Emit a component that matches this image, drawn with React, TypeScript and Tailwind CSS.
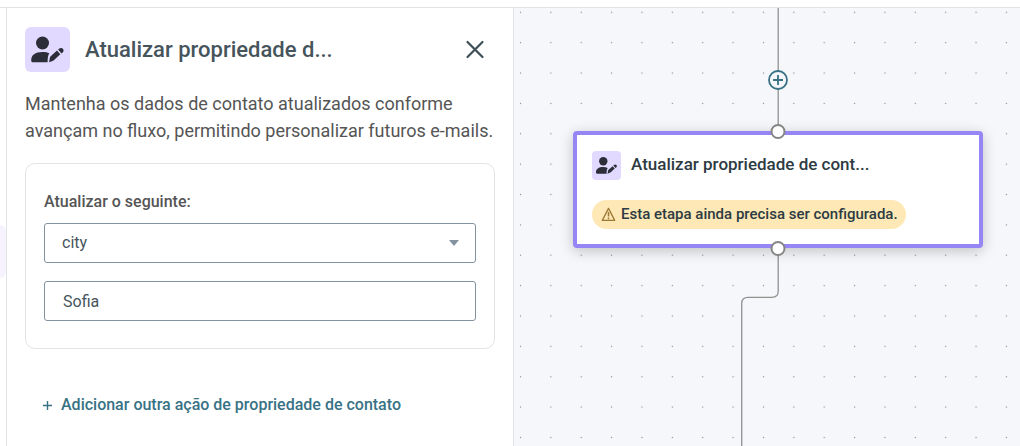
interface IconProps {
    className?: string;
}

function UserEditIcon({ className }: IconProps) {
    return (
        <svg className={className} viewBox="0 0 45 45" fill="#2b2e38" aria-hidden="true">
            <circle cx="17.5" cy="16" r="6.5" />
            <path d="M6.2 33.4C6.2 28 10.200 25 17.300 25c2.900 0 5.200.4 7 1.300-1.300 2.200-1.700 5-1.700 8.900H8C6.700 35.200 6.200 34.500 6.200 33.400z" />
            <path d="M24.100 35.300l.7-4.400c.1-.7.4-1.200.9-1.700l6.300-5.600 3.300 3.700-6.200 5.700c-.4.4-1 .7-1.600.9z" />
            <path d="M33.100 22.600l.9-.8c1.200-1.200 2.900-1.200 3.900-.1s.9 2.700-.3 3.800l-1.100.9z" />
        </svg>
    );
}

function WarningIcon({ className }: IconProps) {
    return (
        <svg className={className} viewBox="0 0 15 15" fill="none" stroke="#9c7a36" aria-hidden="true">
            <path d="M7.5 1.4L13.7 13.4H1.3z" strokeWidth="1.3" strokeLinejoin="round" />
            <path d="M7.5 5v4.6M7.5 10.6v1.6" strokeWidth="1.5" />
        </svg>
    );
}

function PropertyPanel() {
    return (
        <section className="w-[508px] shrink-0 border-x border-[#e1e4e6] bg-white px-[18px] pt-[19px] text-[#555]">
            <header className="flex items-center">
                <div className="size-[45px] shrink-0 rounded-md bg-[#e1d9ff]">
                    <UserEditIcon className="size-full" />
                </div>
                <h2 className="ml-[15px] flex-1 text-[22px] leading-8 font-medium text-[#46545c]">
                    Atualizar propriedade d...
                </h2>
                <button type="button" aria-label="Fechar" className="mr-2 flex size-6 items-center justify-center">
                    <svg className="size-5" viewBox="0 0 20 20" fill="none" stroke="#3f4f58" strokeWidth="2.2" strokeLinecap="round">
                        <path d="M2.500 2l15 15M17.500 2l-15 15" />
                    </svg>
                </button>
            </header>

            <p className="mt-[18px] text-[18px] leading-[27px]">
                Mantenha os dados de contato atualizados conforme avançam no fluxo, permitindo personalizar futuros e-mails.
            </p>

            <div className="mt-[19px] rounded-[10px] border border-[#e1e4e6] px-[18px] pt-[26px] pb-[27px]">
                <label htmlFor="property" className="block text-[16px] leading-6 font-medium">
                    Atualizar o seguinte:
                </label>
                <div className="relative mt-[9px]">
                    <select
                        id="property"
                        defaultValue="city"
                        className="block h-10 w-full appearance-none rounded-[3px] border border-[#8493a0] bg-white px-[17px] text-[16px] text-[#46545c]"
                    >
                        <option value="city">city</option>
                    </select>
                    <svg className="pointer-events-none absolute top-[17px] right-[17px] h-[6px] w-[10px]" viewBox="0 0 10 6" fill="#8493a0">
                        <path d="M0 0h10L5 6z" />
                    </svg>
                </div>
                <input
                    type="text"
                    aria-label="Valor"
                    defaultValue="Sofia"
                    className="mt-[18px] block h-10 w-full rounded-[3px] border border-[#8493a0] bg-white px-[18px] text-[16px] text-[#46545c]"
                />
            </div>

            <button type="button" className="mt-11 ml-[17px] flex items-center gap-2 text-[16px] leading-6 font-medium text-[#387285]">
                <svg className="size-[11px]" viewBox="0 0 11 11" stroke="currentColor" strokeWidth="1.4">
                    <path d="M1 5.5h9M5.5 1v9" />
                </svg>
                Adicionar outra ação de propriedade de contato
            </button>
        </section>
    );
}

function Handle({ className }: IconProps) {
    return <span className={`absolute left-1/2 size-[15px] -translate-x-1/2 rounded-full border-2 border-[#858585] bg-white ${className}`} />;
}

function FlowNode() {
    return (
        <article className="absolute top-[123px] left-[59px] w-[410px] rounded-[4px] border-4 border-[#9685f5] bg-white px-[15px] pt-4 pb-[15px] text-[#2d3b42] shadow-[0_3px_14px_rgba(0,0,0,0.22)]">
            <Handle className="-top-[11px]" />
            <div className="flex items-start gap-[10px]">
                <div className="size-[29px] shrink-0 rounded-[4px] bg-[#e1d9ff]">
                    <UserEditIcon className="size-full" />
                </div>
                <h3 className="text-[17px] leading-[27px] font-medium">Atualizar propriedade de cont...</h3>
            </div>
            <p className="mt-5 flex h-[29px] w-fit items-center gap-[5px] rounded-full bg-[#fee9b6] pr-2 pl-[9px] text-[15px] font-medium">
                <WarningIcon className="size-[15px]" />
                Esta etapa ainda precisa ser configurada.
            </p>
            <Handle className="-bottom-3" />
        </article>
    );
}

function FlowCanvas() {
    return (
        <main className="relative flex-1 overflow-hidden bg-[#f6f7fa]">
            <svg className="absolute inset-0 size-full" fill="none" aria-hidden="true">
                <pattern id="dots" x="-8.7" y="-10.9" width="30.37" height="30.37" patternUnits="userSpaceOnUse">
                    <circle cx="15.2" cy="15.2" r="0.7" fill="#8c8f94" />
                </pattern>
                <rect width="100%" height="100%" fill="url(#dots)" />
                <g stroke="#919191" strokeWidth="1.3">
                    <path d="M264.200 0V123" />
                    <path d="M264.200 240V283.500Q264.200 289.300 258 289.300H234Q227.700 289.300 227.700 295.500V2000" />
                </g>
            </svg>
            <button type="button" aria-label="Adicionar etapa" className="absolute top-[62px] left-[254px] size-5">
                <svg className="size-full" viewBox="0 0 20 20" fill="#f6f7fa" stroke="#387285" strokeWidth="1.8">
                    <circle cx="10" cy="10" r="9" />
                    <path d="M5 10h10M10 5v10" />
                </svg>
            </button>
            <FlowNode />
        </main>
    );
}

export default function App() {
    return (
        <div className="flex min-h-screen flex-col bg-white font-[Roboto,sans-serif]">
            <div className="h-2 border-b border-[#e1e4e6]" />
            <div className="flex flex-1">
                <div className="w-[6px] shrink-0 pt-[217px]">
                    <div className="h-[53px] rounded-r-md bg-[#f6f3ff]" />
                </div>
                <div className="flex min-w-0 flex-1">
                    <PropertyPanel />
                    <FlowCanvas />
                </div>
            </div>
        </div>
    );
}
